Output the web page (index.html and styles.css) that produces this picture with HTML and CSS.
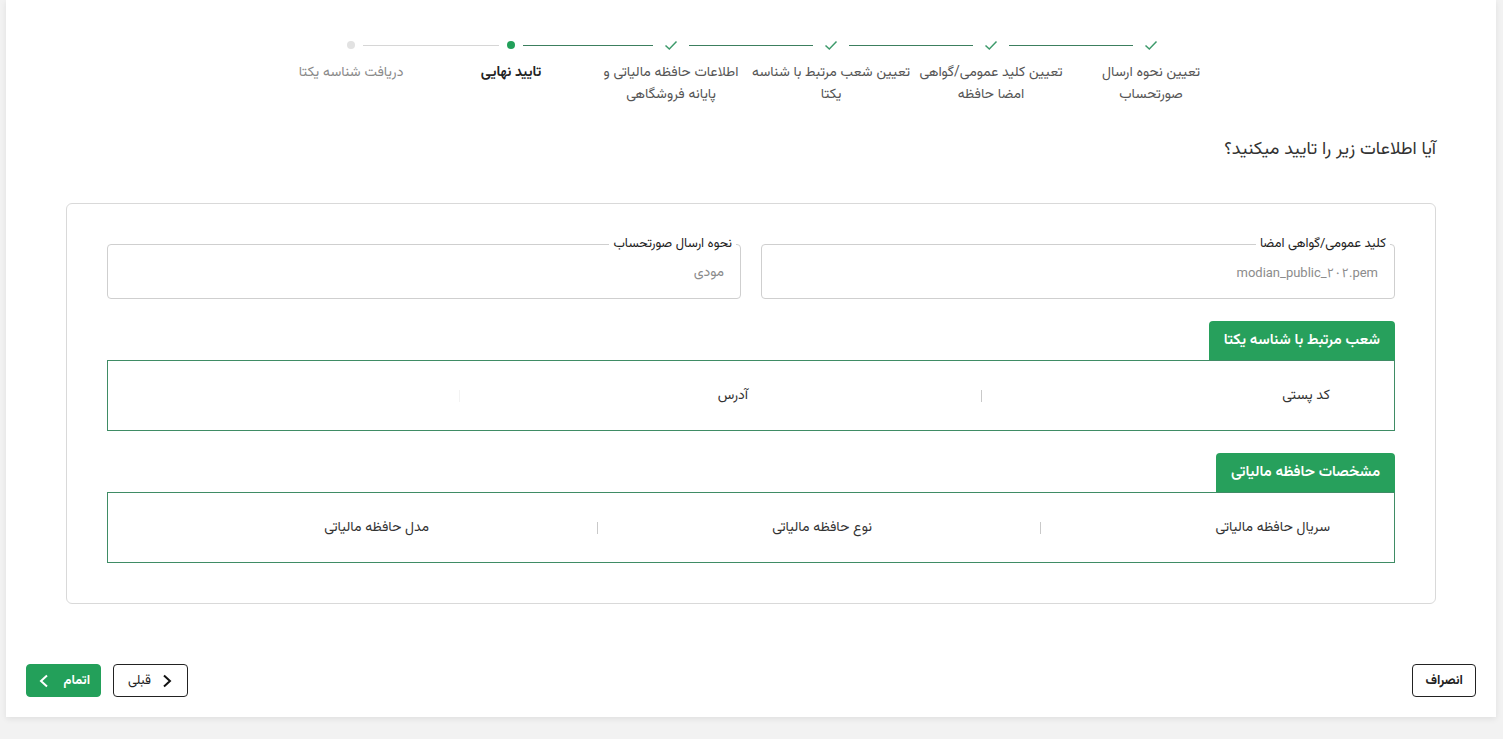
FILE: index.html
```html
<!DOCTYPE html>
<html lang="fa" dir="rtl">
<head>
<meta charset="utf-8">
<title>تایید نهایی</title>
<link rel="stylesheet" href="styles.css">
</head>
<body>
<div class="panel">
  <div class="stepper">
    <div class="step">
      <div class="step-head"><span class="line none"></span><span class="icon"><svg viewBox="0 0 16 16" width="16" height="16"><path d="M2.5 8.5 L6.3 12 L13.5 4.6" fill="none" stroke="#3d9a6b" stroke-width="1.5"/></svg></span><span class="line green"></span></div>
      <div class="label">تعیین نحوه ارسال<br>صورتحساب</div>
    </div>
    <div class="step">
      <div class="step-head"><span class="line green"></span><span class="icon"><svg viewBox="0 0 16 16" width="16" height="16"><path d="M2.5 8.5 L6.3 12 L13.5 4.6" fill="none" stroke="#3d9a6b" stroke-width="1.5"/></svg></span><span class="line green"></span></div>
      <div class="label">تعیین کلید عمومی/گواهی<br>امضا حافظه</div>
    </div>
    <div class="step">
      <div class="step-head"><span class="line green"></span><span class="icon"><svg viewBox="0 0 16 16" width="16" height="16"><path d="M2.5 8.5 L6.3 12 L13.5 4.6" fill="none" stroke="#3d9a6b" stroke-width="1.5"/></svg></span><span class="line green"></span></div>
      <div class="label">تعیین شعب مرتبط با شناسه<br>یکتا</div>
    </div>
    <div class="step">
      <div class="step-head"><span class="line green"></span><span class="icon"><svg viewBox="0 0 16 16" width="16" height="16"><path d="M2.5 8.5 L6.3 12 L13.5 4.6" fill="none" stroke="#3d9a6b" stroke-width="1.5"/></svg></span><span class="line green"></span></div>
      <div class="label">اطلاعات حافظه مالیاتی و<br>پایانه فروشگاهی</div>
    </div>
    <div class="step active">
      <div class="step-head"><span class="line green"></span><span class="icon dot-box"><span class="dot on"></span></span><span class="line gray"></span></div>
      <div class="label">تایید نهایی</div>
    </div>
    <div class="step todo">
      <div class="step-head"><span class="line gray"></span><span class="icon dot-box"><span class="dot off"></span></span><span class="line none"></span></div>
      <div class="label">دریافت شناسه یکتا</div>
    </div>
  </div>

  <h2 class="title">آیا اطلاعات زیر را تایید میکنید؟</h2>

  <div class="summary">
    <div class="fields">
      <div class="field">
        <span class="field-label">کلید عمومی/گواهی امضا</span>
        <span class="field-value ltr">modian_public_۲۰۲.pem</span>
      </div>
      <div class="field">
        <span class="field-label">نحوه ارسال صورتحساب</span>
        <span class="field-value">مودی</span>
      </div>
    </div>

    <section class="group">
      <div class="tab">شعب مرتبط با شناسه یکتا</div>
      <div class="box branches">
        <div class="cell first"><span>کد پستی</span><i class="sep"></i></div>
        <div class="cell wide"><span>آدرس</span><i class="sep faint"></i></div>
        <div class="cell"></div>
      </div>
    </section>

    <section class="group">
      <div class="tab">مشخصات حافظه مالیاتی</div>
      <div class="box memory">
        <div class="cell first"><span>سریال حافظه مالیاتی</span><i class="sep"></i></div>
        <div class="cell"><span>نوع حافظه مالیاتی</span><i class="sep"></i></div>
        <div class="cell"><span>مدل حافظه مالیاتی</span></div>
      </div>
    </section>
  </div>

  <div class="actions">
    <button class="btn outline">انصراف</button>
    <div class="nav">
      <button class="btn outline prev"><svg viewBox="0 0 12 16" width="12" height="16"><path d="M3 2.5 L9 8 L3 13.5" fill="none" stroke="#111" stroke-width="2"/></svg><span>قبلی</span></button>
      <button class="btn primary"><span>اتمام</span><svg viewBox="0 0 12 16" width="12" height="16"><path d="M9 2.5 L3 8 L9 13.5" fill="none" stroke="#fff" stroke-width="2"/></svg></button>
    </div>
  </div>
</div>
</body>
</html>
```
FILE: styles.css
```css
html, body {
  margin: 0;
  padding: 0;
}
body {
  background: #f2f2f2;
  font-family: "Vazirmatn", "Noto Sans Arabic", "Noto Sans", "DejaVu Sans", sans-serif;
  color: #333;
  width: 1503px;
  height: 739px;
  overflow: hidden;
}
.panel {
  margin: 0 7px 0 6px;
  height: 717px;
  box-sizing: border-box;
  background: #fff;
  padding: 33px 0 20px;
  box-shadow: 0 2px 6px rgba(0,0,0,0.08);
  display: flex;
  flex-direction: column;
}

/* stepper */
.stepper {
  display: grid;
  grid-template-columns: repeat(6, 160px);
  justify-content: center;
}
.step {
  display: flex;
  flex-direction: column;
  align-items: stretch;
}
.step-head {
  display: flex;
  align-items: center;
  height: 24px;
}
.line {
  flex: 1;
  height: 1px;
}
.line.green { background: #3c7f5e; }
.line.gray { background: #d6d6d6; }
.line.none { background: transparent; }
.icon {
  width: 36px;
  height: 24px;
  display: flex;
  align-items: center;
  justify-content: center;
}
.icon.dot-box { width: 24px; }
.dot {
  width: 8px;
  height: 8px;
  border-radius: 50%;
}
.dot.on { background: #22a05a; }
.dot.off { background: #e2e2e2; }
.label {
  margin-top: 5px;
  text-align: center;
  font-size: 14px;
  line-height: 22px;
  color: #555;
  white-space: nowrap;
}
.step.active .label {
  font-weight: 700;
  color: #222;
}
.step.todo .label { color: #8a8a8a; }

/* title */
.title {
  margin: 32px 60px 0;
  font-size: 18px;
  line-height: 24px;
  font-weight: 400;
  color: #333;
}

/* summary card */
.summary {
  margin: 41px 60px 0;
  border: 1px solid #d9d9d9;
  border-radius: 6px;
  padding: 40px;
}
.fields {
  display: grid;
  grid-template-columns: 1fr 1fr;
  gap: 20px;
}
.field {
  position: relative;
  height: 55px;
  box-sizing: border-box;
  border: 1px solid #cfcfcf;
  border-radius: 4px;
  padding: 0 16px;
  display: flex;
  align-items: center;
}
.field-label {
  position: absolute;
  top: -9px;
  right: 4px;
  padding: 0 4px;
  background: #fff;
  font-size: 13px;
  line-height: 17px;
  color: #222;
}
.field-value {
  font-size: 14px;
  color: #8c8c8c;
  padding-top: 2px;
}
.field-value.ltr {
  font-size: 13px;
  font-family: Roboto, "Liberation Sans", "Noto Sans Arabic", sans-serif;
  direction: ltr;
}

.group {
  margin-top: 22px;
  display: flex;
  flex-direction: column;
  align-items: flex-start;
}
.tab {
  height: 39px;
  padding: 0 15px;
  display: flex;
  align-items: center;
  background: #27a05c;
  color: #fff;
  font-size: 15px;
  font-weight: 600;
  border-radius: 4px 4px 0 0;
}
.box {
  align-self: stretch;
  height: 71px;
  box-sizing: border-box;
  border: 1px solid #3f8c65;
  display: grid;
  align-items: center;
}
.box.branches { grid-template-columns: 413px 522px 1fr; }
.box.memory { grid-template-columns: 354px 443px 1fr; }
.cell {
  display: flex;
  align-items: center;
  padding-right: 168px;
  font-size: 14px;
  color: #333;
}
.cell.first { padding-right: 64px; }
.box.branches .cell.wide { padding-right: 233px; }
.sep {
  margin-right: auto;
  width: 1px;
  height: 12px;
  background: #c9c9c9;
}
.sep.faint { background: #f3f3f3; }

/* actions */
.actions {
  margin-top: 60px;
  padding: 0 20px 0 20px;
  display: flex;
  justify-content: space-between;
  align-items: center;
}
.nav {
  display: flex;
  gap: 12px;
}
.btn {
  height: 33px;
  box-sizing: border-box;
  border-radius: 4px;
  font-family: inherit;
  font-size: 13px;
  font-weight: 700;
  display: flex;
  align-items: center;
  gap: 12px;
  cursor: pointer;
}
.btn.outline {
  background: #fff;
  border: 1px solid #222;
  color: #222;
  padding: 0 12px;
}
.btn.outline.prev {
  width: 75px;
  padding: 0 14px;
  font-weight: 400;
  gap: 10px;
}
.btn.primary {
  width: 75px;
  background: #23a05a;
  border: 1px solid #23a05a;
  color: #fff;
  padding: 0 10px;
  gap: 14px;
}
```
